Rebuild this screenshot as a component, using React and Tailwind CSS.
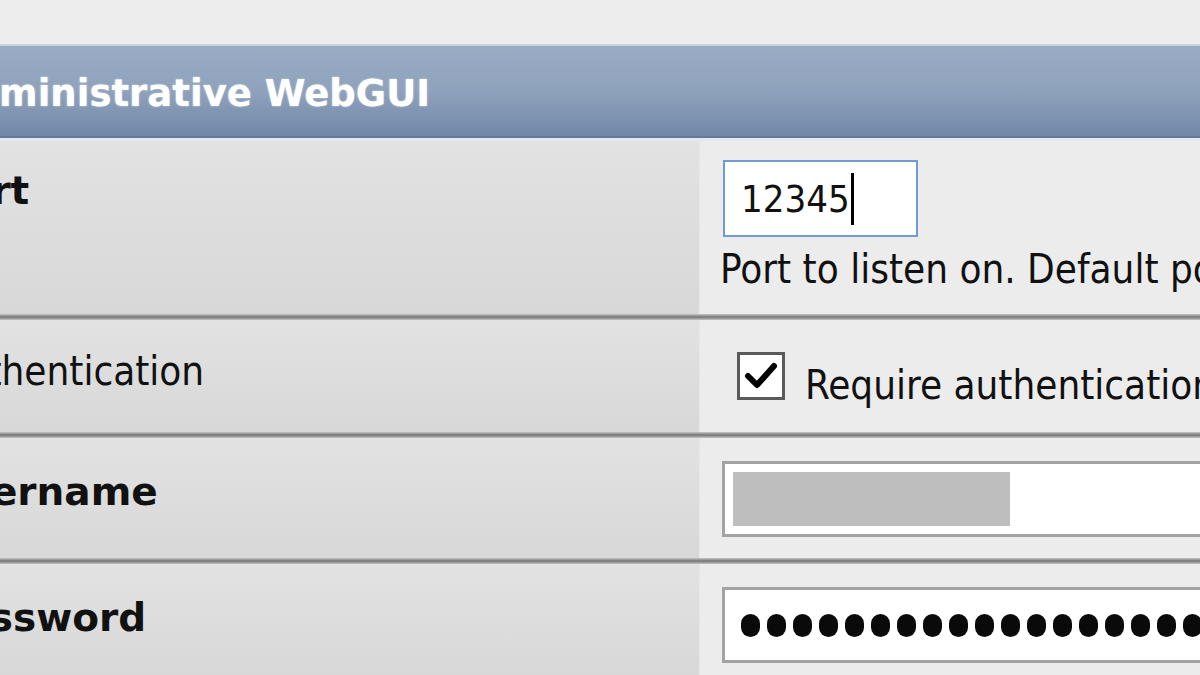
import React from 'react';

const boldFont = "font-['DejaVu_Sans',sans-serif] font-bold";
const regFont = "font-['DejaVu_Sans_Condensed','Liberation_Sans',sans-serif]";

const Separator = () => (
  <div className="h-[6px] bg-[linear-gradient(to_bottom,#c9c9c9,#838383_40%,#838383_62%,#c7c7c7)]" />
);

const Row = ({ label, bold, height, labelPad, labelShift, children }) => (
  <div className="flex" style={{ height }}>
    <div className="w-[700px] shrink-0 overflow-hidden bg-gradient-to-b from-[#e2e2e2] to-[#d8d8d8] border-r border-[#e6e6e6]">
      <div
        className={`whitespace-nowrap leading-none text-[#111] ${bold ? boldFont + ' text-[39px]' : regFont + ' text-[40px]'}`}
        style={{ paddingTop: labelPad, marginLeft: labelShift }}
      >
        {label}
      </div>
    </div>
    <div className="flex-1 min-w-0 overflow-hidden bg-[#ececec]">{children}</div>
  </div>
);

export default function App() {
  const dots = Array.from({ length: 22 });

  return (
    <div className="w-[1200px] h-[675px] overflow-hidden bg-[#ededed] pt-[44px]">
      {/* section header */}
      <div className="h-[94px] flex items-center overflow-hidden border-t-2 border-[#c9d2de] border-b-2 border-b-[#637b9b] bg-gradient-to-b from-[#9aacc4] via-[#8fa2bc] to-[#7188a8]">
        <span className={`${boldFont} -ml-[56px] mt-[4px] whitespace-nowrap text-[37px] leading-none text-white [text-shadow:0_0_2px_rgba(255,255,255,0.6)]`}>
          Administrative WebGUI
        </span>
      </div>
      <div className="h-[3px] bg-[#e3e8ee]" />

      {/* Port */}
      <Row label="Port" bold height={173} labelPad={30} labelShift={-64}>
        <div className="pl-[23px] pt-[19px]">
          <div className="w-[195px] h-[77px] bg-white border-2 border-[#6f9dd3] flex items-center pl-[16px]">
            <span className={`${regFont} text-[38px] leading-none text-[#111]`}>12345</span>
            <span className="ml-[1px] w-[3px] h-[52px] bg-black" />
          </div>
          <p className={`${regFont} text-[40px] leading-none text-[#111] whitespace-nowrap -ml-[3px] mt-[12px]`}>
            Port to listen on. Default port is 80.
          </p>
        </div>
      </Row>
      <Separator />

      {/* Authentication */}
      <Row label="Authentication" height={112} labelPad={31} labelShift={-60}>
        <div className="pl-[37px] pt-[32px] flex items-end gap-[20px]">
          <div className="w-[48px] h-[48px] shrink-0 bg-white border-[3px] border-[#5a5a5a] flex items-center justify-center">
            <svg width="34" height="30" viewBox="0 0 34 30">
              <path d="M4 15 L13 24 L30 5" fill="none" stroke="#000" strokeWidth="6" strokeLinejoin="round" strokeLinecap="round" />
            </svg>
          </div>
          <span className={`${regFont} text-[40px] leading-none text-[#111] whitespace-nowrap mb-[-5px]`}>
            Require authentication
          </span>
        </div>
      </Row>
      <Separator />

      {/* Username */}
      <Row label="Username" bold height={120} labelPad={34} labelShift={-64}>
        <div className="pl-[22px] pt-[23px]">
          <div className="h-[76px] w-[600px] bg-white border-[3px] border-[#a3a3a3] p-[8px]">
            <div className="w-[277px] h-full bg-[#bebebe]" />
          </div>
        </div>
      </Row>
      <Separator />

      {/* Password */}
      <Row label="Password" bold height={111} labelPad={34} labelShift={-64}>
        <div className="pl-[22px] pt-[23px]">
          <div className="h-[76px] w-[600px] bg-white border-[3px] border-[#a3a3a3] flex items-center gap-[7px] pl-[16px]">
            {dots.map((_, i) => (
              <span key={i} className="w-[19px] h-[23px] shrink-0 rounded-full bg-[#0a0a0a]" />
            ))}
          </div>
        </div>
      </Row>
    </div>
  );
}
